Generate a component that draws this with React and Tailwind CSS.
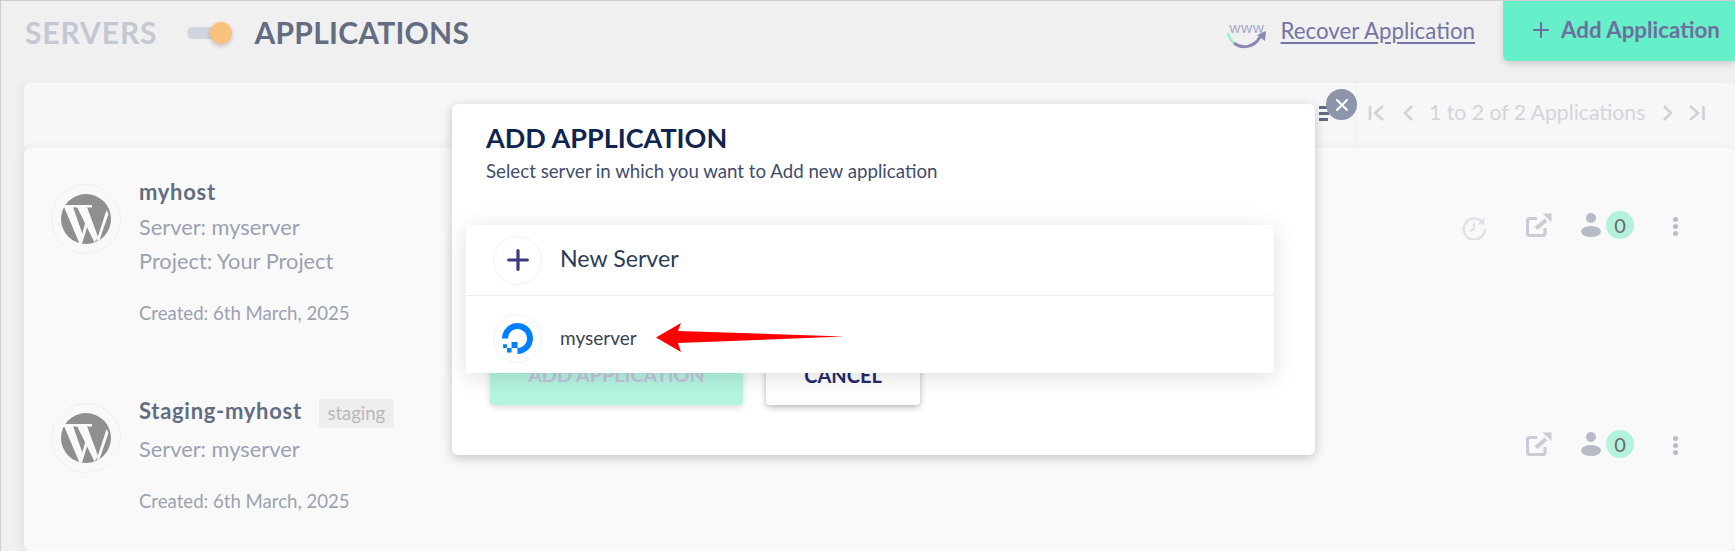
import React from "react";
import { SiDigitalocean } from "react-icons/si";
import { Plus, X } from "lucide-react";

const Pager = ({ d }) => (
  <svg width="18" height="18" viewBox="0 0 18 18" fill="none" stroke="#d0d2d9" strokeWidth="2.6"><path d={d} /></svg>
);

const External = () => (
  <svg width="26" height="24" viewBox="0 0 26 24" fill="none" stroke="#c9ccd5" strokeWidth="3.2">
    <path d="M11 5.500H3.500a2 2 0 0 0-2 2v13a2 2 0 0 0 2 2H17a2 2 0 0 0 2-2V15" />
    <path d="M10 15.500l10-8.500" strokeWidth="4" />
    <path d="M16.500 0.500h9v8.500z" fill="#c9ccd5" stroke="none" />
  </svg>
);

const Person = () => (
  <svg width="20" height="24" viewBox="0 0 20 24" fill="#b7bbc6">
    <circle cx="10" cy="5" r="5" />
    <ellipse cx="10" cy="18.500" rx="10" ry="5.500" />
  </svg>
);

const Clock = () => (
  <svg width="24" height="24" viewBox="0 0 24 24" fill="none" stroke="#dfe1e5" strokeWidth="2.4">
    <path d="M20.500 6.500A10.500 10.500 0 1 0 22.800 13" />
    <path d="M22.500 1.500v7h-7z" fill="#dfe1e5" stroke="none" />
    <path d="M12 7v6l-4 2" strokeWidth="2" />
  </svg>
);

const WpLogo = () => (
  <svg width="50" height="50" viewBox="0 0 50 50">
    <circle cx="25" cy="25" r="25" fill="#8f8f8f" />
    <g fill="#f9f9fa">
      <polygon points="2,11 31,11 31,13.500 2,13.500" />
      <polygon points="3,13 12,13 22.500,43 18.500,49.500" />
      <polygon points="16,13 26,13 37,43 33.500,48.500" />
      <polygon points="18.500,49.500 21,49.500 26.500,32 24.500,28" />
      <polygon points="35.500,47 45.500,16 47.500,20 38.500,46" />
    </g>
  </svg>
);

const Dots = () => (
  <div className="flex flex-col gap-[2px]">
    <span className="block h-[5px] w-[5px] rounded-full bg-[#b9bdc9]" />
    <span className="block h-[5px] w-[5px] rounded-full bg-[#b9bdc9]" />
    <span className="block h-[5px] w-[5px] rounded-full bg-[#b9bdc9]" />
  </div>
);

const Row = ({ title, badge, project, clock, height, serverGap, createdGap }) => (
  <div className={`flex ${height} pt-[36px] pl-[27px] pr-[57px]`}>
    <div className="flex h-[70px] w-[70px] shrink-0 items-center justify-center rounded-full border border-[#f0f0f1]">
      <WpLogo />
    </div>
    <div className="ml-[18px] -mt-[5px] flex flex-col">
      <div className="flex items-start">
        <span className="text-[22px] leading-[26px] font-bold tracking-[0.7px] text-[#626d82]">{title}</span>
        {badge && (
          <span className="ml-[17px] mt-[1px] flex h-[29px] w-[75px] items-center justify-center bg-[#eeeeee] text-[18.500px] text-[#b9b9b9]">{badge}</span>
        )}
      </div>
      <span className={`${serverGap} text-[21.800px] leading-[26px] text-[#9aa1b1]`}>Server: myserver</span>
      {project && <span className="mt-[8px] text-[21.800px] leading-[26px] text-[#9aa1b1]">{project}</span>}
      <span className={`${createdGap} text-[18.600px] leading-[24px] text-[#9aa1b1]`}>Created: 6th March, 2025</span>
    </div>
    <div className="ml-auto mt-[27px] flex h-[28px] items-center">
      {clock && <span className="mr-[40px] mt-[6px]"><Clock /></span>}
      <span className="mr-[29px]"><External /></span>
      <span><Person /></span>
      <span className="ml-[5px] flex h-[28px] w-[28px] items-center justify-center rounded-full bg-[#b5f2de] text-[20px] text-[#6a6a66]">0</span>
      <span className="ml-[39px] mt-[3px]"><Dots /></span>
    </div>
  </div>
);

export default function App() {
  return (
    <div className="relative h-[551px] w-[1735px] overflow-hidden border-t border-l border-[#cfcfcf] bg-[#f0f0f0] font-['Lato',sans-serif]">
      {/* header */}
      <header className="flex h-[82px] items-start">
        <div className="flex items-center pl-[24px] pt-[11px] text-[30px] leading-[40px] font-bold">
          <span className="tracking-[0.9px] text-[#c3c8d2]">SERVERS</span>
          <div className="relative ml-[30px] mt-[1px] h-[12px] w-[28px] rounded-full bg-[#d0d4de]">
            <span className="absolute left-[23px] top-[-5px] h-[22px] w-[22px] rounded-full bg-[#f8c27c] shadow-[0_2px_4px_rgba(0,0,0,0.2)]" />
          </div>
          <span className="ml-[39px] tracking-[0.25px] text-[#626d82]">APPLICATIONS</span>
        </div>
        <div className="ml-auto flex items-start">
          <div className="relative mt-[20px] h-[28px] w-[40px]">
            <span className="absolute inset-x-0 top-[-3px] text-center text-[15px] leading-[18px] text-[#a9a9c8]">www</span>
            <svg width="40" height="28" viewBox="0 0 40 28" fill="none">
              <path d="M1 12c1 4 3 8 6 10" stroke="#8ff0d2" strokeWidth="2.500" />
              <path d="M7 22c7 6 20 5 26-6" stroke="#8888b4" strokeWidth="3" />
              <path d="M39 10l-1 10-8-6z" fill="#8888b4" />
            </svg>
          </div>
          <a className="ml-[14px] mt-[17px] text-[22.300px] leading-[26px] text-[#7474a6] underline underline-offset-[3px]">Recover Application</a>
          <button className="ml-[28px] flex h-[60px] w-[232px] items-center rounded-bl-[6px] bg-[#65f0c9] pb-[3px] pl-[26px] text-[22.300px] font-bold text-[#6e6f9e] shadow-[0_3px_6px_rgba(0,0,0,0.15)]">
            <Plus size={24} strokeWidth={2.2} className="mr-[8px]" />
            Add Application
          </button>
        </div>
      </header>

      {/* content */}
      <section className="ml-[23px] flex h-[64px] rounded-t-[6px] bg-[#f7f7f7] shadow-[-4px_0_8px_rgba(0,0,0,0.03)]">
        <div className="ml-auto flex h-full w-[379px] items-center border-l border-[#f0f0f0] pb-[4px] pl-[11px] text-[21.200px] text-[#d3d5db]">
          <Pager d="M2 2v14M15 2L7 9l8 7" />
          <span className="ml-[14px]"><Pager d="M12 2L5 9l7 7" /></span>
          <span className="ml-[11px]">1 to 2 of 2 Applications</span>
          <span className="ml-[13px]"><Pager d="M6 2l7 7-7 7" /></span>
          <span className="ml-[12px]"><Pager d="M2 2l8 7-8 7M15.500 2v14" /></span>
        </div>
      </section>
      <main className="ml-[23px] h-[404px] rounded-[6px] border-t border-[#f2f2f2] bg-[#f9f9fa] shadow-[-4px_0_10px_rgba(0,0,0,0.05)]">
        <Row title="myhost" project="Project: Your Project" clock height="h-[219px]" serverGap="mt-[9px]" createdGap="mt-[27px]" />
        <Row title="Staging-myhost" badge="staging" height="h-[184px]" serverGap="mt-[8px]" createdGap="mt-[27px]" />
      </main>

      {/* filter icon behind the close button */}
      <div className="absolute left-[1318px] top-[105px] flex flex-col items-start gap-[3px]">
        <span className="block h-[3px] w-[10px] bg-[#626a80]" />
        <span className="block h-[3px] w-[10px] bg-[#626a80]" />
        <span className="block h-[3px] w-[9px] bg-[#626a80]" />
      </div>

      {/* modal */}
      <div className="absolute left-[451px] top-[103px] h-[351px] w-[863px] rounded-[6px] bg-white px-[34px] pt-[18px] shadow-[0_3px_12px_rgba(0,0,0,0.22)]">
        <h2 className="text-[27px] leading-[32px] font-bold text-[#0f2550]">ADD APPLICATION</h2>
        <p className="mt-[5px] text-[18.700px] leading-[24px] text-[#3f4d6b]">Select server in which you want to Add new application</p>

        <div className="absolute left-[38px] top-[241px] flex gap-[23px]">
          <button className="flex h-[60px] w-[253px] items-center justify-center rounded-[4px] bg-[#b3f5e1] text-[19.800px] font-bold text-[#c4c2dd] shadow-[0_2px_6px_rgba(0,0,0,0.15)]">ADD APPLICATION</button>
          <button className="flex h-[60px] w-[154px] items-center justify-center rounded-[4px] bg-white text-[20px] font-bold text-[#242a6b] shadow-[0_2px_6px_rgba(0,0,0,0.3)]">CANCEL</button>
        </div>

        <div className="absolute left-[14px] top-[121px] w-[808px] bg-white shadow-[0_4px_22px_rgba(0,0,0,0.13)]">
          <div className="flex h-[71px] items-center border-b border-[#ececec] pl-[27px]">
            <span className="flex h-[49px] w-[49px] items-center justify-center rounded-full border border-[#f1f1f1]">
              <Plus size={32} strokeWidth={2.4} className="text-[#3b3a80]" />
            </span>
            <span className="ml-[18px] pb-[3px] text-[23.200px] text-[#2b3a5a]">New Server</span>
          </div>
          <div className="flex h-[77px] items-center pl-[27px] pt-[8px]">
            <span className="flex h-[49px] w-[49px] items-center justify-center rounded-full border border-[#f1f1f1]">
              <SiDigitalocean className="text-[31px] text-[#0080ff]" />
            </span>
            <span className="ml-[18px] text-[19px] text-[#3a4256]">myserver</span>
          </div>
        </div>

        <button className="absolute left-[874px] top-[-15px] flex h-[31px] w-[31px] items-center justify-center rounded-full bg-[#8e95aa] text-white">
          <X size={20} strokeWidth={2.5} />
        </button>
      </div>

      {/* annotation arrow */}
      <svg className="absolute left-[655px] top-[322px]" width="190" height="29" viewBox="0 0 190 29">
        <polygon points="0,14.500 25,0 22,8 188,13.500 22,20 25,29" fill="#ff0000" />
      </svg>
    </div>
  );
}
